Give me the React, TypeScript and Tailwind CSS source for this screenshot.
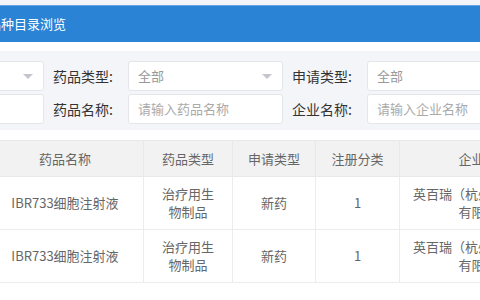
const FONT = "font-['Microsoft_YaHei','Noto_Sans_CJK_SC',sans-serif]";

const ROWS = [
  { name: 'IBR733细胞注射液', type: '治疗用生物制品', apply: '新药', cls: '1', corp: '英百瑞（杭州）生物医药有限公司' },
  { name: 'IBR733细胞注射液', type: '治疗用生物制品', apply: '新药', cls: '1', corp: '英百瑞（杭州）生物医药有限公司' },
];

function Arrow() {
  return (
    <svg width="10" height="6" viewBox="0 0 10 6" className="absolute right-[10px] top-[12px]">
      <path d="M0 0 L10 0 L5 5 Z" fill="#c4c6cc" />
    </svg>
  );
}

function Field({ label, value, placeholder, select }: { label?: string; value?: string; placeholder?: string; select?: boolean }) {
  return (
    <div className="flex items-center">
      {label && <span className="w-[84px] pl-[9px] text-[14px] text-[#333]">{label}</span>}
      <div className="relative flex h-[30px] w-[155px] items-center rounded-[3px] border border-[#e4e6eb] bg-white pl-[9px] text-[13px]">
        {value && <span className="text-[#999]">{value}</span>}
        {placeholder && <span className="text-[#aaa]">{placeholder}</span>}
        {select && <Arrow />}
      </div>
    </div>
  );
}

export default function App() {
  return (
    <div className={`h-[300px] w-[480px] overflow-hidden bg-white ${FONT}`}>
      <div className="h-[5px] bg-[#f4f5f9]" />
      <div className="flex h-[37px] items-center border-t border-[#62a6e6] bg-[#2a83d5]">
        <span className="ml-[-12px] text-[13px] text-white">品种目录浏览</span>
      </div>
      <div className="h-[9px] bg-white" />
      <div className="flex h-[79px] flex-col gap-[3px] bg-[#f4f5f9] pt-[10px]">
        <div className="ml-[-111px] flex">
          <Field value="全部" select />
          <Field label="药品类型:" value="全部" select />
          <Field label="申请类型:" value="全部" select />
        </div>
        <div className="ml-[-111px] flex">
          <Field />
          <Field label="药品名称:" placeholder="请输入药品名称" />
          <Field label="企业名称:" placeholder="请输入企业名称" />
        </div>
      </div>
      <div className="h-[10px]" />
      <table className="ml-[-14px] w-[583px] table-fixed border-collapse text-center text-[13px] text-[#666]">
        <colgroup>
          <col className="w-[157px]" />
          <col className="w-[89px]" />
          <col className="w-[83px]" />
          <col className="w-[84px]" />
          <col className="w-[170px]" />
        </colgroup>
        <thead>
          <tr className="h-[36px] bg-[#f2f2f2]">
            {['药品名称', '药品类型', '申请类型', '注册分类', '企业名称'].map((h) => (
              <th key={h} className="border border-[#e8e8e8] font-normal">{h}</th>
            ))}
          </tr>
        </thead>
        <tbody>
          {ROWS.map((r, i) => (
            <tr key={i} className="h-[53px]">
              <td className="border border-[#ececec] px-[10px]">{r.name}</td>
              <td className="border border-[#ececec] px-[14px] leading-[18px]">{r.type}</td>
              <td className="border border-[#ececec]">{r.apply}</td>
              <td className="border border-[#ececec]">{r.cls}</td>
              <td className="border border-[#ececec] px-[12px] leading-[18px]">{r.corp}</td>
            </tr>
          ))}
        </tbody>
      </table>
    </div>
  );
}
